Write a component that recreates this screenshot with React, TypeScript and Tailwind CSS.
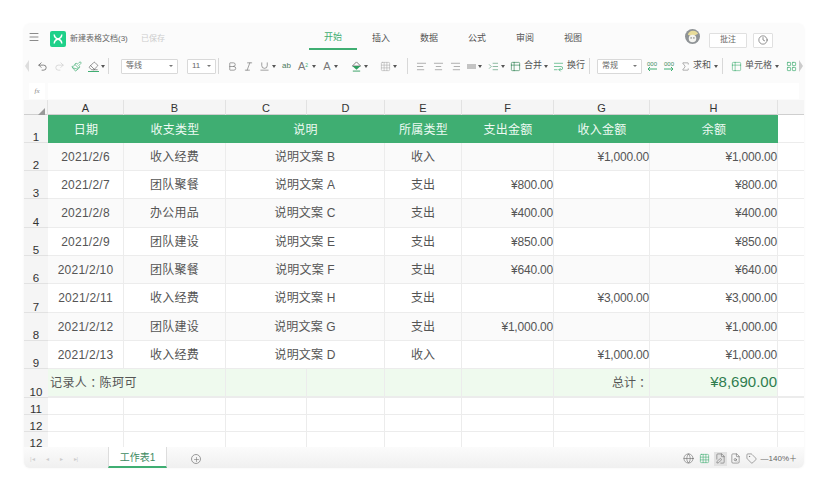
import { Menu, Undo2, Redo2, Clock, Plus, Sigma, Globe, Grid3x3, Eraser, Paintbrush, Underline, Bold, Italic, AlignLeft, AlignCenter, AlignRight, WrapText, Table2, LayoutGrid, FileEdit, FileSearch, Tag, IndentIncrease } from 'lucide-react'

const rows = [
  ['2021/2/6', '收入经费', '说明文案 B', '收入', '', '¥1,000.00', '¥1,000.00'],
  ['2021/2/7', '团队聚餐', '说明文案 A', '支出', '¥800.00', '', '¥800.00'],
  ['2021/2/8', '办公用品', '说明文案 C', '支出', '¥400.00', '', '¥400.00'],
  ['2021/2/9', '团队建设', '说明文案 E', '支出', '¥850.00', '', '¥850.00'],
  ['2021/2/10', '团队聚餐', '说明文案 F', '支出', '¥640.00', '', '¥640.00'],
  ['2021/2/11', '收入经费', '说明文案 H', '支出', '', '¥3,000.00', '¥3,000.00'],
  ['2021/2/12', '团队建设', '说明文案 G', '支出', '¥1,000.00', '', '¥1,000.00'],
  ['2021/2/13', '收入经费', '说明文案 D', '收入', '', '¥1,000.00', '¥1,000.00'],
]

const heights = [28, 28, 29, 28, 28, 29, 28, 28]
const grid = 'grid grid-cols-[24px_76px_102px_81px_78px_77px_92px_96px_128px_26px]'
const icon = 'h-[11px] w-[11px] shrink-0'

function Caret() {
  return <span className="mx-[2px] h-0 w-0 shrink-0 border-x-[2px] border-t-[3px] border-x-transparent border-t-[#555]" />
}

function Sep({ ml }: { ml: string }) {
  return <span className={`h-[16px] w-px shrink-0 bg-[#d8d8d8] ${ml}`} />
}

function Select({ text, width, ml }: { text: string; width: string; ml: string }) {
  return (
    <span className={`flex h-[15px] shrink-0 items-center justify-between rounded-[1px] border border-[#d9d9d9] bg-white px-1 text-[8px] text-[#666] ${width} ${ml}`}>
      {text}
      <span className="h-0 w-0 border-x-[2px] border-t-[2px] border-x-transparent border-t-[#777]" />
    </span>
  )
}

function Label({ text, ml }: { text: string; ml: string }) {
  return <span className={`shrink-0 whitespace-nowrap text-[9px] text-[#555] ${ml}`}>{text}</span>
}

function Thousands({ ml, flip }: { ml: string; flip?: boolean }) {
  return (
    <span className={`flex w-[10px] shrink-0 flex-col items-center text-[6px] leading-[6px] text-[#3d8a5f] ${ml}`}>
      000
      <svg viewBox="0 0 10 4" className="h-[4px] w-[10px]" fill="none" stroke="#3fae72" strokeWidth="1">
        {flip ? <path d="M0 2h9M7 0l2 2-2 2" /> : <path d="M10 2H1M3 0L1 2l2 2" />}
      </svg>
    </span>
  )
}

function Head({ n, h }: { n: number; h: number }) {
  return (
    <div
      className="flex items-end justify-center border-b border-[#e2e2e2] bg-[#f5f5f5] text-[11.5px] leading-[10px] text-[#333]"
      style={{ height: h }}
    >
      {n}
    </div>
  )
}

function Cell({ children, className = '' }: { children?: React.ReactNode; className?: string }) {
  return (
    <div className={`flex items-center whitespace-pre border-b border-r border-[#ececec] text-[12px] text-[#555] ${className}`}>
      {children}
    </div>
  )
}

function GreenHead({ text, className = '' }: { text: string; className?: string }) {
  return (
    <div className={`flex items-center justify-center bg-[#3fae72] pt-[1px] text-[12px] tracking-[0.25px] text-[#eefaf3] ${className}`}>
      {text}
    </div>
  )
}

export default function App() {
  return (
    <div className="h-[491px] w-[828px] overflow-hidden bg-white pl-[24px] pt-[24px] font-['Liberation_Sans','Noto_Sans_CJK_SC',sans-serif]">
      <div className="flex h-[444px] w-[780px] flex-col overflow-hidden rounded-[6px] bg-[#fbfbfb] shadow-[0_0_3px_rgba(0,0,0,0.05)]">
        {/* title bar */}
        <div className="flex h-[26px] shrink-0 items-center pt-[3px]">
          <Menu className="mb-[3px] ml-[4px] h-[12px] w-[12px] text-[#666]" strokeWidth={1.5} />
          <span className="ml-[10px] flex h-[16px] w-[16px] items-center justify-center rounded-[2px] bg-[#1fd18a]">
            <svg viewBox="0 0 16 16" className="h-[12px] w-[12px]" fill="none" stroke="#fff" strokeWidth="2">
              <path d="M3 2c0 4 2 5 5 6s5 2 5 6M13 2c0 4-2 5-5 6s-5 2-5 6" />
            </svg>
          </span>
          <span className="ml-[4px] w-[66px] whitespace-nowrap text-[8px] text-[#666]">新建表格文档(3)</span>
          <span className="ml-[5px] whitespace-nowrap text-[8px] text-[#ccc]">已保存</span>
          <div className="ml-[144px] flex h-full text-[9px] text-[#555]">
            <span className="flex h-full w-[48px] items-center justify-center border-b-[2px] border-[#3fae72] text-[#3fae72]">开始</span>
            <span className="flex w-[48px] items-center justify-center">插入</span>
            <span className="flex w-[48px] items-center justify-center">数据</span>
            <span className="flex w-[48px] items-center justify-center">公式</span>
            <span className="flex w-[48px] items-center justify-center">审阅</span>
            <span className="flex w-[48px] items-center justify-center">视图</span>
          </div>
          <svg viewBox="0 0 16 16" className="mb-[5px] ml-[88px] h-[15px] w-[15px]">
            <circle cx="8" cy="8" r="8" fill="#8f9396" />
            <path d="M3 6a6 6 0 0 1 11-1L8 8z" fill="#e8dc9a" />
            <circle cx="8" cy="10" r="4" fill="#f4f4f0" />
            <circle cx="6.5" cy="9.5" r="0.7" fill="#555" />
            <circle cx="9.5" cy="9.5" r="0.7" fill="#555" />
          </svg>
          <span className="ml-[9px] mt-[3px] flex h-[15px] w-[38px] items-center justify-center rounded-[1px] border border-[#e0e0e0] bg-white text-[8px] text-[#666]">批注</span>
          <span className="ml-[6px] mt-[3px] flex h-[15px] w-[20px] items-center justify-center rounded-[1px] border border-[#e0e0e0] bg-white">
            <Clock className="h-[10px] w-[10px] text-[#555]" strokeWidth={1.5} />
          </span>
        </div>
        {/* toolbar */}
        <div className="flex h-[32px] shrink-0 items-center text-[#777]">
          <span className="ml-[1px] h-0 w-0 shrink-0 border-y-[6px] border-r-[4px] border-y-transparent border-r-[#ddd]" />
          <Undo2 className={`${icon} ml-[8px] text-[#555]`} strokeWidth={1.5} />
          <Redo2 className={`${icon} ml-[6px] text-[#ccc]`} strokeWidth={1.5} />
          <Paintbrush className={`${icon} ml-[6px] text-[#3fae72]`} strokeWidth={1.5} />
          <span className="ml-[6px] flex shrink-0 border-b border-[#3fae72]">
            <Eraser className="h-[10px] w-[11px] text-[#555]" strokeWidth={1.5} />
          </span>
          <Caret />
          <Sep ml="ml-[1px]" />
          <Select text="等线" width="w-[57px]" ml="ml-[12px]" />
          <Select text="11" width="w-[29px]" ml="ml-[9px]" />
          <Sep ml="ml-[2px]" />
          <Bold className={`${icon} ml-[8px]`} strokeWidth={1.5} />
          <Italic className={`${icon} ml-[5px]`} strokeWidth={1.5} />
          <Underline className={`${icon} ml-[5px]`} strokeWidth={1.5} />
          <Caret />
          <span className="ml-[4px] w-[9px] shrink-0 text-[8px] leading-none text-[#4c7a5e]">ab</span>
          <span className="ml-[7px] w-[12px] shrink-0 whitespace-nowrap text-[11px] leading-none">A<sup className="text-[5px] text-[#3fae72]">2</sup></span>
          <Caret />
          <span className="ml-[4px] w-[10px] shrink-0 text-center text-[11px] leading-none">A</span>
          <Caret />
          <svg viewBox="0 0 12 12" className={`${icon} ml-[11px]`} fill="none">
            <path d="M6 1l4.5 4.5H1.5z" stroke="#777" />
            <path d="M1.5 5.5h9L6 9.5z" fill="#2f9e5f" />
            <path d="M2 11h8" stroke="#2f9e5f" />
          </svg>
          <Caret />
          <Grid3x3 className={`${icon} ml-[10px] text-[#aaa]`} strokeWidth={1.25} />
          <Caret />
          <Sep ml="ml-[8px]" />
          <AlignLeft className={`${icon} ml-[8px]`} strokeWidth={1.25} />
          <AlignCenter className={`${icon} ml-[6px]`} strokeWidth={1.25} />
          <AlignRight className={`${icon} ml-[6px]`} strokeWidth={1.25} />
          <span className="ml-[6px] h-[5px] w-[9px] shrink-0 bg-[#c4c4c4]" />
          <Caret />
          <IndentIncrease className={`${icon} ml-[4px] text-[#3d8a5f]`} strokeWidth={1.25} />
          <Caret />
          <Table2 className={`${icon} ml-[3px] text-[#3d8a5f]`} strokeWidth={1.5} />
          <Label text="合并" ml="ml-[3px]" />
          <Caret />
          <WrapText className={`${icon} ml-[3px] text-[#3fae72]`} strokeWidth={1.5} />
          <Label text="换行" ml="ml-[3px]" />
          <Sep ml="ml-[4px]" />
          <Select text="常规" width="w-[45px]" ml="ml-[7px]" />
          <Thousands ml="ml-[5px]" />
          <Thousands ml="ml-[7px]" flip />
          <Sigma className={`${icon} ml-[6px]`} strokeWidth={1.25} />
          <Label text="求和" ml="ml-[2px]" />
          <span className="ml-[1px] flex shrink-0"><Caret /></span>
          <Sep ml="ml-[2px]" />
          <Table2 className={`${icon} ml-[8px] text-[#3fae72]`} strokeWidth={1.25} />
          <Label text="单元格" ml="ml-[3px]" />
          <span className="ml-[1px] flex shrink-0"><Caret /></span>
          <LayoutGrid className={`${icon} ml-[5px] text-[#3fae72]`} strokeWidth={1.5} />
          <span className="ml-[2px] h-0 w-0 shrink-0 border-y-[6px] border-l-[4px] border-y-transparent border-l-[#ccc]" />
        </div>
        {/* formula bar */}
        <div className="flex h-[18px] shrink-0 gap-[3px] pl-[5px] pr-[5px] pt-[1px]">
          <span className="flex h-[16px] w-[16px] items-center justify-center bg-white font-['Liberation_Serif',serif] text-[7px] italic text-[#888]">fx</span>
          <span className="h-[16px] flex-1 bg-white" />
        </div>
        {/* sheet */}
        <div className="min-h-0 flex-1 overflow-hidden bg-white">
          <div className={`${grid} h-[15px] border-b border-[#cfcfcf] bg-[#f5f5f5] text-[11px] leading-[16px] text-[#333]`}>
            <div className="flex items-end justify-end border-r border-[#e2e2e2] pb-[1px] pr-[2px]">
              <span className="h-0 w-0 border-b-[7px] border-l-[7px] border-b-[#999] border-l-transparent" />
            </div>
            {['A', 'B', 'C', 'D', 'E', 'F', 'G', 'H'].map((c) => (
              <div key={c} className="border-r border-[#e2e2e2] text-center">{c}</div>
            ))}
            <div />
          </div>

          <div className={`${grid} h-[28px]`}>
            <Head n={1} h={28} />
            <GreenHead text="日期" />
            <GreenHead text="收支类型" />
            <GreenHead text="说明" className="col-span-2" />
            <GreenHead text="所属类型" />
            <GreenHead text="支出金额" />
            <GreenHead text="收入金额" />
            <GreenHead text="余额" />
            <div className="border-b border-[#ececec]" />
          </div>

          {rows.map((r, i) => {
            const bg = i % 2 === 0 ? 'bg-[#fafafa]' : ''
            return (
              <div key={r[0]} className={grid} style={{ height: heights[i] }}>
                <Head n={i + 2} h={heights[i]} />
                <Cell className={`justify-center tracking-[0.25px] ${bg}`}>{r[0]}</Cell>
                <Cell className={`justify-center tracking-[0.25px] ${bg}`}>{r[1]}</Cell>
                <Cell className={`col-span-2 justify-center tracking-[0.15px] ${bg}`}>{r[2]}</Cell>
                <Cell className={`justify-center ${bg}`}>{r[3]}</Cell>
                <Cell className={`justify-end tracking-[-0.2px] ${bg}`}>{r[4]}</Cell>
                <Cell className={`justify-end tracking-[-0.2px] ${bg}`}>{r[5]}</Cell>
                <Cell className={`justify-end tracking-[-0.2px] ${bg}`}>{r[6]}</Cell>
                <div className="border-b border-[#ececec]" />
              </div>
            )
          })}

          <div className={`${grid} h-[29px]`}>
            <Head n={10} h={29} />
            <Cell className="col-span-2 !border-b-[2px] bg-[#effaee] pl-[2px] tracking-[0.4px]">
              记录人<span className="font-['Noto_Sans_CJK_TC',sans-serif]">：</span>陈珂可
            </Cell>
            <Cell className="!border-b-[2px] bg-[#effaee]" />
            <Cell className="!border-b-[2px] bg-[#effaee]" />
            <Cell className="!border-b-[2px] bg-[#effaee]" />
            <Cell className="!border-b-[2px] bg-[#effaee]" />
            <Cell className="!border-b-[2px] justify-end bg-[#effaee] pr-[1px]">
              总计<span className="font-['Noto_Sans_CJK_TC',sans-serif]">：</span>
            </Cell>
            <Cell className="!border-b-[2px] justify-end bg-[#effaee] !text-[15px] !text-[#2f7d4f]">¥8,690.00</Cell>
            <div className="border-b-[2px] border-[#ececec]" />
          </div>

          {[11, 12, 12].map((n, i) => (
            <div key={i} className={`${grid} h-[17px]`}>
              <Head n={n} h={17} />
              <Cell />
              <Cell />
              <Cell />
              <Cell />
              <Cell />
              <Cell />
              <Cell />
              <Cell />
              <div className="border-b border-[#ececec]" />
            </div>
          ))}
        </div>
        {/* sheet tabs */}
        <div className="flex h-[21px] shrink-0 items-center bg-gradient-to-b from-[#fbfbfb] to-[#f0f0f0] text-[#ccc]">
          <span className="ml-[6px] flex w-[78px] gap-[11px] pt-[3px] text-[6px]">
            <span>|◂</span><span>◂</span><span>▸</span><span>▸|</span>
          </span>
          <span className="flex h-full w-[59px] items-center justify-center border-x border-b-[2px] border-[#ddd] border-b-[#3fae72] bg-white pt-[2px] text-[10px] text-[#3d8a5f]">工作表1</span>
          <span className="ml-[24px] mt-[3px] flex h-[10px] w-[10px] items-center justify-center rounded-full border border-[#999]">
            <Plus className="h-[7px] w-[7px] text-[#777]" strokeWidth={2} />
          </span>
          <div className="ml-auto flex items-center pr-[7px] pt-[2px] text-[#666]">
            <Globe className={icon} strokeWidth={1.25} />
            <Grid3x3 className={`${icon} ml-[5px] text-[#3fae72]`} strokeWidth={1.25} />
            <span className="ml-[4px] flex h-[14px] w-[13px] items-center justify-center bg-[#e2e2e2]">
              <FileEdit className={icon} strokeWidth={1.25} />
            </span>
            <FileSearch className={`${icon} ml-[3px]`} strokeWidth={1.25} />
            <Tag className={`${icon} ml-[5px]`} strokeWidth={1.25} />
            <span className="ml-[4px] whitespace-nowrap text-[8px]">—140%＋</span>
          </div>
        </div>
      </div>
    </div>
  )
}
